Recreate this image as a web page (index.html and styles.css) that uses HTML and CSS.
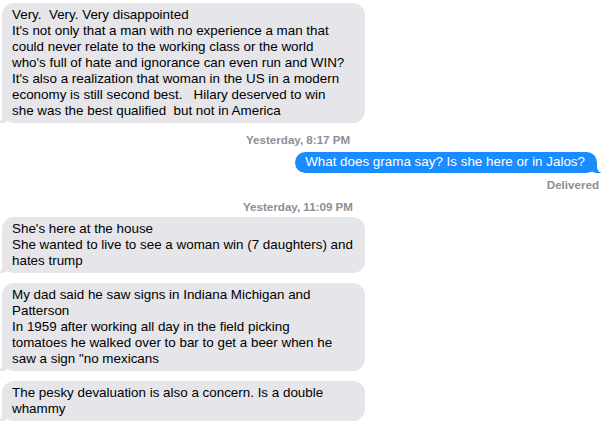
FILE: index.html
```html
<!DOCTYPE html>
<html>
<head>
<meta charset="utf-8">
<link rel="stylesheet" href="styles.css">
</head>
<body>
<div class="thread">
  <div class="bubble in b1">Very.&nbsp; Very. Very disappointed<br>It's not only that a man with no experience a man that<br>could never relate to the working class or the world<br>who's full of hate and ignorance can even run and WIN?<br>It's also a realization that woman in the US in a modern<br>economy is still second best.&nbsp;&nbsp; Hilary deserved to win<br>she was the best qualified&nbsp; but not in America</div>
  <div class="stamp s1">Yesterday, 8:17 PM</div>
  <div class="bubble out">What does grama say? Is she here or in Jalos?</div>
  <div class="status">Delivered</div>
  <div class="stamp s2">Yesterday, 11:09 PM</div>
  <div class="bubble in">She's here at the house<br>She wanted to live to see a woman win (7 daughters) and<br>hates trump</div>
  <div class="bubble in">My dad said he saw signs in Indiana Michigan and<br>Patterson<br>In 1959 after working all day in the field picking<br>tomatoes he walked over to bar to get a beer when he<br>saw a sign "no mexicans</div>
  <div class="bubble in">The pesky devaluation is also a concern. Is a double<br>whammy</div>
</div>
</body>
</html>
```
FILE: styles.css
```css
html, body {
  margin: 0;
  padding: 0;
  background: #ffffff;
}
body {
  width: 608px;
  height: 427px;
  overflow: hidden;
  font-family: "Liberation Sans", Arial, sans-serif;
  font-size: 13.4px;
  color: #000;
}
.thread {
  display: flex;
  flex-direction: column;
  padding: 3px 0 0 2px;
}
.bubble {
  position: relative;
  line-height: 16px;
  padding: 4px 10px;
  border-radius: 12px;
  white-space: nowrap;
}
.in {
  align-self: flex-start;
  width: 343px;
  background: #e5e5ea;
  margin-bottom: 10px;
}
.in.b1 {
  margin-bottom: 0;
}
.in::before {
  content: "";
  position: absolute;
  left: -4px;
  bottom: 0;
  width: 12px;
  height: 10px;
  background: #e5e5ea;
  border-bottom-right-radius: 8px 7px;
}
.in::after {
  content: "";
  position: absolute;
  left: -12px;
  bottom: 0;
  width: 12px;
  height: 10px;
  background: #fff;
  border-bottom-right-radius: 6px;
}
.out {
  align-self: flex-end;
  margin-right: 11px;
  background: #1a8cfe;
  color: #fff;
  padding: 2px 12px 3px 10px;
}
.out::before {
  content: "";
  position: absolute;
  right: -4px;
  bottom: 0;
  width: 12px;
  height: 10px;
  background: #1a8cfe;
  border-bottom-left-radius: 8px 7px;
}
.out::after {
  content: "";
  position: absolute;
  right: -12px;
  bottom: 0;
  width: 12px;
  height: 10px;
  background: #fff;
  border-bottom-left-radius: 6px;
}
.stamp, .status {
  font-size: 11.6px;
  font-weight: bold;
  color: #8e8e93;
  line-height: 13px;
}
.stamp {
  align-self: flex-start;
  margin-left: 244px;
}
.s1 {
  margin-top: 10px;
  margin-bottom: 6px;
}
.s2 {
  margin-top: 9px;
  margin-bottom: 4px;
  margin-left: 241px;
}
.status {
  align-self: flex-end;
  margin-right: 9px;
  margin-top: 5px;
}
```
